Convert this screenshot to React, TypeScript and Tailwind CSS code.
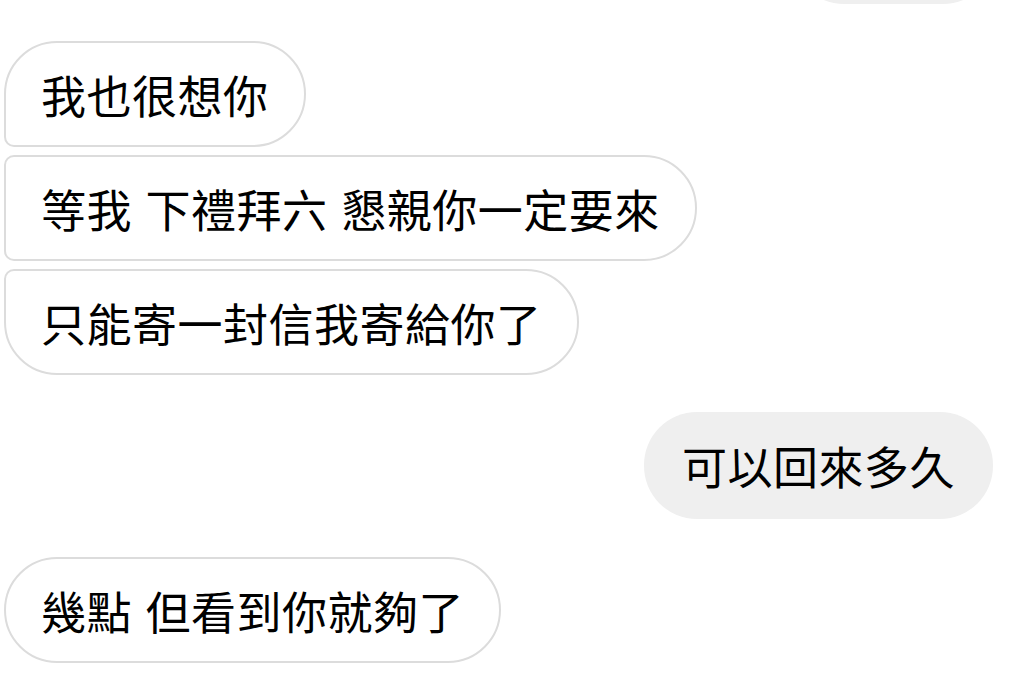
import React from "react";

type Msg = {
  id: number;
  text: string;
  mine?: boolean;
  shape: string;
};

const messages: Msg[] = [
  { id: 1, text: "我也很想你", shape: "rounded-tl-[53px] rounded-bl-[10px] rounded-r-[53px]" },
  { id: 2, text: "等我 下禮拜六 懇親你一定要來", shape: "rounded-l-[10px] rounded-r-[53px]" },
  { id: 3, text: "只能寄一封信我寄給你了", shape: "rounded-tl-[10px] rounded-bl-[53px] rounded-r-[53px]" },
  { id: 4, text: "可以回來多久", mine: true, shape: "rounded-[53px]" },
  { id: 5, text: "幾點 但看到你就夠了", shape: "rounded-[53px]" },
];

function Bubble({ msg }: { msg: Msg }) {
  if (msg.mine) {
    return (
      <div className={`flex h-[107px] items-center self-end bg-[#efefef] px-[38px] ${msg.shape}`}>
        <span>{msg.text}</span>
      </div>
    );
  }
  return (
    <div
      className={`flex h-[106px] items-center self-start border-2 border-[#dcdcdc] bg-white pl-[35px] pr-[35px] ${msg.shape}`}
    >
      <span>{msg.text}</span>
    </div>
  );
}

export default function App() {
  return (
    <div
      className="flex h-[689px] w-[1018px] flex-col overflow-hidden bg-white pl-[4px] pr-[25px] text-[45px] leading-none tracking-[0.5px] text-black [word-spacing:3px]"
      style={{ fontFamily: '"Noto Sans CJK TC", "Noto Sans", sans-serif' }}
    >
      {/* previous message, scrolled out of view above */}
      <div className="-mr-[3px] -mt-[102px] h-[106px] w-[205px] self-end rounded-[53px] bg-[#efefef]" />

      <div className="mt-[37px] flex flex-col gap-[8px]">
        <Bubble msg={messages[0]} />
        <Bubble msg={messages[1]} />
        <Bubble msg={messages[2]} />
      </div>

      <div className="mt-[37px] flex flex-col">
        <Bubble msg={messages[3]} />
      </div>

      <div className="mt-[38px] flex flex-col">
        <Bubble msg={messages[4]} />
      </div>
    </div>
  );
}
